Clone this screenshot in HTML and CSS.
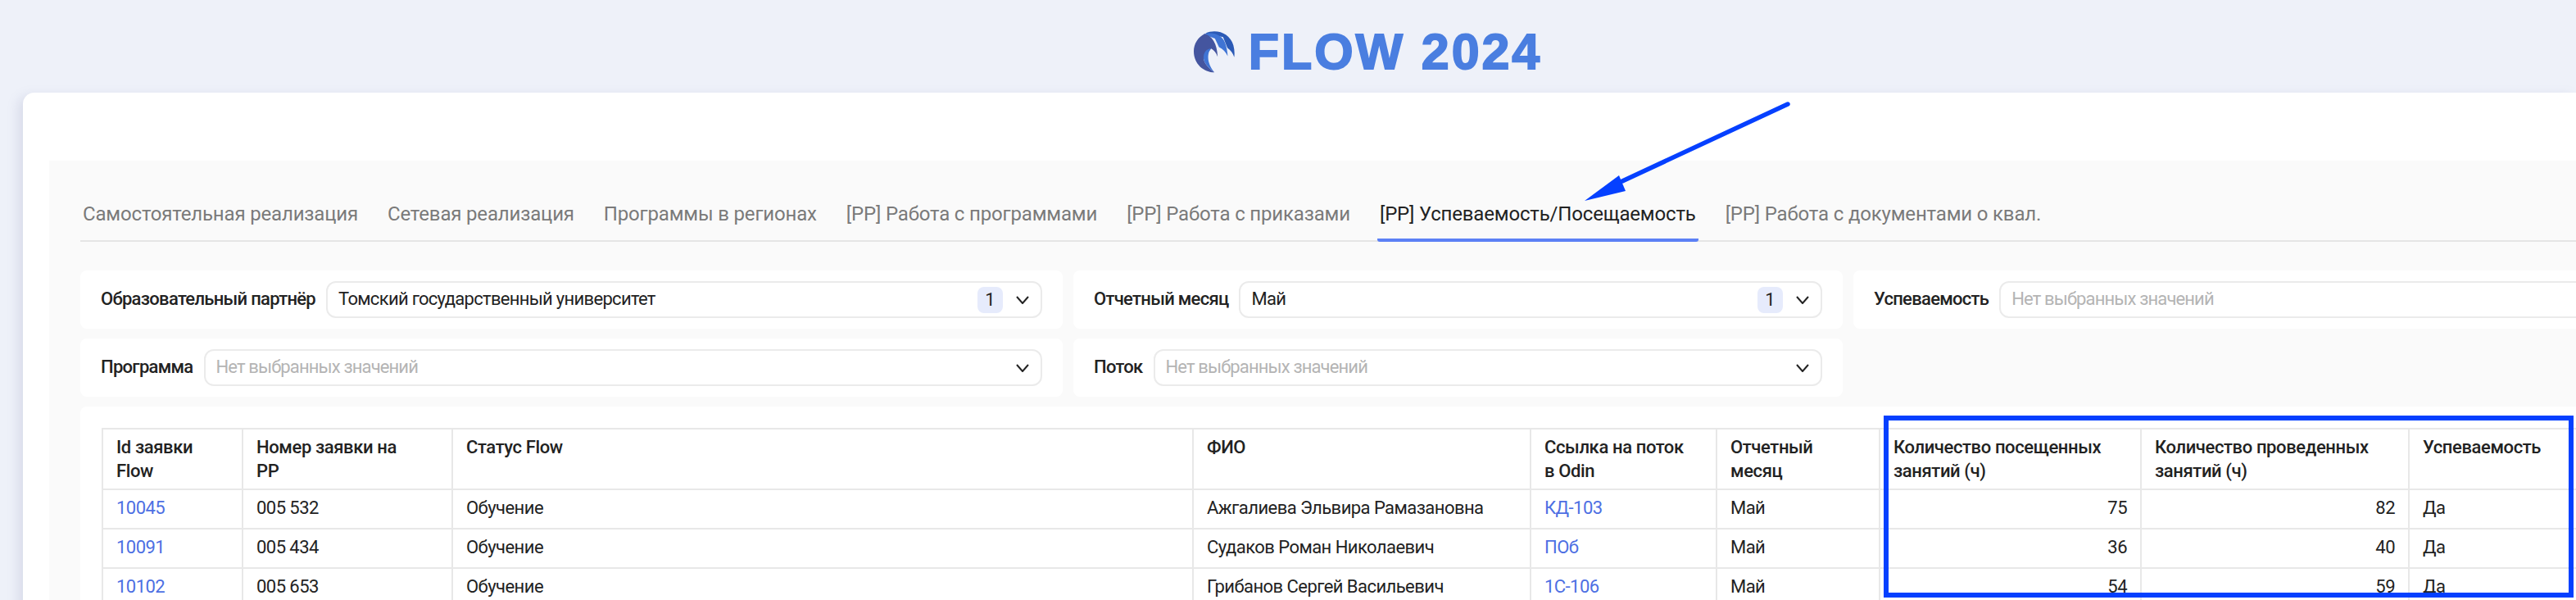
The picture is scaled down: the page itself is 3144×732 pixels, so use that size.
FILE: index.html
```html
<!DOCTYPE html>
<html lang="ru">
<head>
<meta charset="utf-8">
<title>FLOW 2024</title>
<link rel="stylesheet" href="styles.css">
</head>
<body>
<div class="page">
  <header class="head">
    <svg class="logo" viewBox="80 45 155 157" aria-hidden="true">
      <path fill="#2b5ab6" d="M125 56C165 38 215 55 228 100C232 115 233 130 231 144C226 128 218 118 206 110L190 70Z"/>
      <path fill="#3f74d4" d="M118 60C150 48 185 60 197 90C203 105 206 122 207 140C200 125 190 114 175 107L160 75Z"/>
      <path fill="#44559f" d="M122 58C150 65 168 95 170 142C165 128 157 118 146 112L118 148C120 168 140 188 158 200C120 200 82 170 82 122C82 95 98 70 122 58Z"/>
      <path fill="#3f74d4" d="M146 112C128 112 117 128 118 148C120 168 140 188 158 200C145 185 135 165 135 145C135 128 140 118 146 112Z"/>
    </svg>
    <span class="brand">FLOW 2024</span>
  </header>
  <main class="card">
    <section class="panel">
      <nav class="tabs">
        <span class="tab">Самостоятельная реализация</span>
        <span class="tab">Сетевая реализация</span>
        <span class="tab">Программы в регионах</span>
        <span class="tab">[РР] Работа с программами</span>
        <span class="tab">[РР] Работа с приказами</span>
        <span class="tab active">[РР] Успеваемость/Посещаемость</span>
        <span class="tab">[РР] Работа с документами о квал.</span>
      </nav>
      <div class="filters">
        <div class="filter">
          <span class="flabel">Образовательный партнёр</span>
          <div class="select"><span class="value">Томский государственный университет</span><span class="badge">1</span><svg class="chev" viewBox="0 0 16 10"><path d="M1 1l7 8 7-8"/></svg></div>
        </div>
        <div class="filter">
          <span class="flabel">Отчетный месяц</span>
          <div class="select"><span class="value">Май</span><span class="badge">1</span><svg class="chev" viewBox="0 0 16 10"><path d="M1 1l7 8 7-8"/></svg></div>
        </div>
        <div class="filter">
          <span class="flabel">Успеваемость</span>
          <div class="select"><span class="value empty">Нет выбранных значений</span></div>
        </div>
        <div class="filter">
          <span class="flabel">Программа</span>
          <div class="select"><span class="value empty">Нет выбранных значений</span><svg class="chev" viewBox="0 0 16 10"><path d="M1 1l7 8 7-8"/></svg></div>
        </div>
        <div class="filter">
          <span class="flabel">Поток</span>
          <div class="select"><span class="value empty">Нет выбранных значений</span><svg class="chev" viewBox="0 0 16 10"><path d="M1 1l7 8 7-8"/></svg></div>
        </div>
      </div>
      <div class="tablecard">
        <table class="grid">
          <colgroup>
            <col class="c1"><col class="c2"><col class="c3"><col class="c4"><col class="c5"><col class="c6"><col class="c7"><col class="c8"><col class="c9">
          </colgroup>
          <thead>
            <tr><th>Id заявки Flow</th><th>Номер заявки на<br>РР</th><th>Статус Flow</th><th>ФИО</th><th>Ссылка на поток<br>в Odin</th><th>Отчетный месяц</th><th>Количество посещенных занятий (ч)</th><th>Количество проведенных занятий (ч)</th><th>Успеваемость</th></tr>
          </thead>
          <tbody>
            <tr><td class="link">10045</td><td>005 532</td><td>Обучение</td><td>Ажгалиева Эльвира Рамазановна</td><td class="link">КД-103</td><td>Май</td><td class="num">75</td><td class="num">82</td><td>Да</td></tr>
            <tr><td class="link">10091</td><td>005 434</td><td>Обучение</td><td>Судаков Роман Николаевич</td><td class="link">ПОб</td><td>Май</td><td class="num">36</td><td class="num">40</td><td>Да</td></tr>
            <tr><td class="link">10102</td><td>005 653</td><td>Обучение</td><td>Грибанов Сергей Васильевич</td><td class="link">1С-106</td><td>Май</td><td class="num">54</td><td class="num">59</td><td>Да</td></tr>
          </tbody>
        </table>
      </div>
    </section>
  </main>
  <svg class="arrow" viewBox="1920 115 275 140" aria-hidden="true">
    <path class="shaft" d="M2182 127L1980 221"/>
    <path class="tip" d="M1934 245L1976 214L1984 233Z"/>
  </svg>
  <div class="mark"></div>
</div>
</body>
</html>
```
FILE: styles.css
```css
* { box-sizing: border-box; }
html, body { margin: 0; height: 732px; overflow: hidden; }
body { background: #eef1f9; font-family: Roboto, "Noto Sans", sans-serif; font-size: 22px; color: #222; }
.page { position: relative; height: 732px; overflow: hidden; }

.head { height: 113px; display: flex; align-items: center; justify-content: center; padding: 13px 0 0 194px; gap: 16px; }
.logo { width: 52px; height: 52px; display: block; }
.brand { font-family: "Liberation Sans", Arial, sans-serif; font-weight: 700; font-size: 61px; line-height: 62px; color: #4a7ee0; -webkit-text-stroke: 1.8px #4a7ee0; letter-spacing: 2.9px; }

.card { margin-left: 28px; height: 700px; background: #fff; border-radius: 14px 0 0 0; padding: 83px 0 0 32px; box-shadow: -6px 4px 14px rgba(120, 130, 170, .18); }
.panel { background: #fafafa; height: 600px; padding: 0 0 0 38px; }

.tabs { display: flex; gap: 30px; height: 99px; align-items: flex-end; border-bottom: 2px solid #e5e5e5; white-space: nowrap; color: #7a7a7a; font-size: 24px; letter-spacing: -.17px; }
.tab { padding: 0 3px 14px; line-height: 32px; margin-bottom: -2px; border-bottom: 4px solid transparent; border-radius: 0 0 3px 3px; }
.tab.active { color: #222; border-bottom-color: #5c80f5; }

.filters { display: grid; grid-template-columns: 1199px 939px 939px; gap: 12px 13px; margin-top: 35px; }
.filter { display: flex; align-items: center; gap: 13px; height: 71px; padding: 0 25px; background: #fff; border-radius: 8px; }
.flabel { font-weight: 500; white-space: nowrap; flex: none; letter-spacing: -.7px; padding-bottom: 2px; }
.select { flex: 1; min-width: 0; height: 45px; display: flex; align-items: center; padding: 0 14px 0 13px; background: #fff; border: 2px solid #ebebeb; border-radius: 12px; }
.value { flex: 1; white-space: nowrap; letter-spacing: -.7px; padding-bottom: 2px; }
.value.empty { color: #b4b4b4; letter-spacing: -.87px; }
.badge { width: 31px; height: 32px; line-height: 32px; text-align: center; background: #e6ebfc; border-radius: 8px; margin-right: 16px; }
.chev { width: 16px; height: 10px; flex: none; }
.chev path { fill: none; stroke: #222; stroke-width: 2; }

.tablecard { margin-top: 12px; background: #fff; border-radius: 8px 0 0 0; padding: 26px; height: 300px; }
.grid { border-collapse: collapse; table-layout: fixed; width: 3120px; }
.c1 { width: 171px; } .c2 { width: 256px; } .c3 { width: 904px; } .c4 { width: 412px; } .c5 { width: 227px; }
.c6 { width: 199px; } .c7 { width: 319px; } .c8 { width: 327px; } .c9 { width: 305px; }
.grid th, .grid td { border: 2px solid #e8e8e8; padding: 0 16px; text-align: left; font-size: 22px; }
.grid th { font-weight: 500; line-height: 29px; padding-top: 7px; padding-bottom: 7px; height: 74px; vertical-align: top; letter-spacing: -.38px; }
.grid td { height: 48px; line-height: 29px; white-space: nowrap; letter-spacing: -.55px; padding-bottom: 4px; }
.grid td.link { color: #4d6fe3; }
.grid td.num { text-align: right; }

.arrow { position: absolute; left: 1920px; top: 115px; width: 275px; height: 140px; }
.shaft { fill: none; stroke: #0540ff; stroke-width: 5.5; stroke-linecap: round; }
.tip { fill: #0540ff; }
.mark { position: absolute; left: 2299px; top: 507px; width: 842px; height: 222px; border: 6px solid #0540ff; }
```
